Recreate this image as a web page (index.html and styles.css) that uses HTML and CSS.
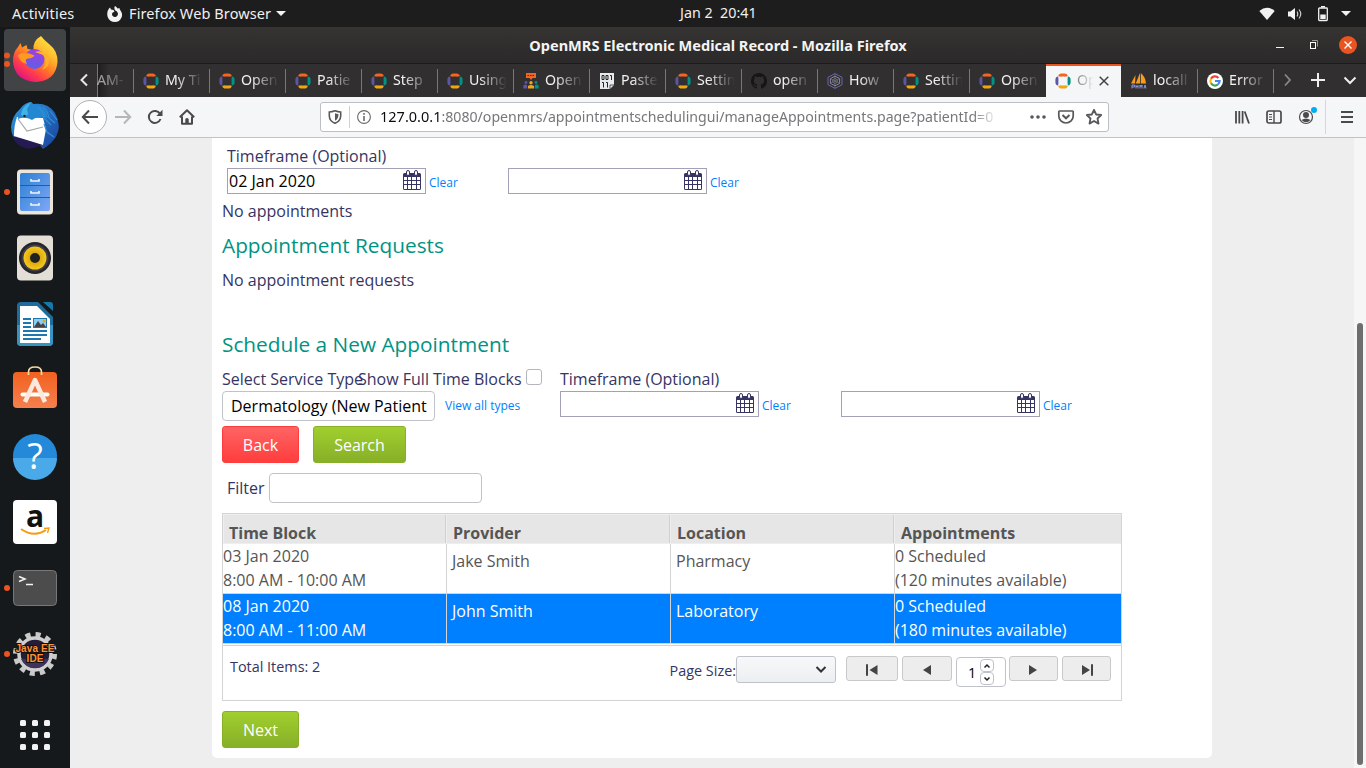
FILE: index.html
```html
<!DOCTYPE html>
<html lang="en">
<head>
<meta charset="utf-8">
<title>OpenMRS Electronic Medical Record</title>
<link rel="stylesheet" href="styles.css">
</head>
<body>
<svg class="sprite" width="0" height="0">
  <defs>
    <linearGradient id="fox" x1="1" y1="0" x2="0.3" y2="1"><stop offset="0" stop-color="#fff44f"/><stop offset=".35" stop-color="#ffc030"/><stop offset=".6" stop-color="#ff7a25"/><stop offset=".8" stop-color="#ff3a4e"/><stop offset="1" stop-color="#e01580"/></linearGradient>
    <linearGradient id="globe" x1="0.6" y1="0" x2="0.3" y2="1"><stop offset="0" stop-color="#a43be0"/><stop offset="1" stop-color="#5a62e8"/></linearGradient>
    <linearGradient id="bird" x1="0" y1="0" x2="1" y2="1"><stop offset="0" stop-color="#2f9be0"/><stop offset="1" stop-color="#1b3f9c"/></linearGradient>
    <linearGradient id="drawer" x1="0" y1="0" x2="1" y2="1"><stop offset="0" stop-color="#2b7fd4"/><stop offset="1" stop-color="#7fa8f5"/></linearGradient>
    <radialGradient id="cone"><stop offset=".4" stop-color="#d9a80c"/><stop offset="1" stop-color="#f7c81d"/></radialGradient>
    <linearGradient id="bag" x1="0" y1="0" x2="0" y2="1"><stop offset="0" stop-color="#f2611f"/><stop offset="1" stop-color="#f4804e"/></linearGradient>
  </defs>
  <symbol id="mrs" viewBox="0 0 16 16"><g fill="none" stroke-width="3"><path d="M4.700 3.500Q4.900 2 6.500 2H9.500Q11.100 2 11.300 3.500" stroke="#f26522"/><path d="M12.700 4.900Q14.100 5.100 14.100 6.700V9.300Q14.100 10.900 12.700 11.100" stroke="#009384"/><path d="M4.700 12.500Q4.900 14 6.500 14H9.500Q11.100 14 11.300 12.500" stroke="#eea616"/><path d="M3.300 4.900Q1.900 5.100 1.900 6.700V9.300Q1.900 10.900 3.300 11.100" stroke="#5b57a6"/></g></symbol>
  <symbol id="talk" viewBox="0 0 16 16"><path d="M3 0H13V5H9.500L8 7L6.500 5H3Z" fill="#f26522"/><path d="M4.500 2.500h7" stroke="#322f30" stroke-dasharray="1.500 1"/><circle cx="3" cy="9.500" r="1.400" fill="#5b57a6"/><circle cx="13" cy="9.500" r="1.400" fill="#009384"/><path d="M.3 15.500V12.800Q2.500 10.500 4.200 12.500V15.500Z" fill="#5b57a6"/><path d="M11.800 15.500V12.500Q13.500 10.500 15.700 12.800V15.500Z" fill="#009384"/><circle cx="8" cy="9.800" r="1.700" fill="#eea616"/><path d="M5 15.500V13Q8 10.800 11 13V15.500Z" fill="#eea616"/></symbol>
  <symbol id="paste" viewBox="0 0 16 16"><path d="M1 0H15V12L11 16H1Z" fill="#e8eaee"/><path d="M15 12H11V16" fill="none" stroke="#555"/><g fill="none" stroke="#222" stroke-width="1"><path d="M3 2.500h2v4h-2zM7 2.500h2v4h-2zM11 2.500h1.500v4.500M3 9.500h1.500v5M7 9.500h1.500v5"/></g></symbol>
  <symbol id="hub" viewBox="0 0 16 16"><path fill="#171516" d="M8 0C3.580 0 0 3.580 0 8c0 3.540 2.290 6.530 5.470 7.590.4.070.55-.17.55-.38v-1.490c-2.230.48-2.700-.94-2.700-.94-.36-.92-.89-1.170-.89-1.170-.73-.5.050-.49.050-.49.810.06 1.230.83 1.230.83.720 1.230 1.880.87 2.340.67.070-.52.280-.88.510-1.080-1.780-.2-3.640-.89-3.640-3.950 0-.87.310-1.590.82-2.150-.08-.2-.36-1.020.08-2.120 0 0 .67-.21 2.200.82a7.600 7.600 0 0 1 4 0c1.530-1.040 2.200-.82 2.200-.82.440 1.100.160 1.920.080 2.120.51.560.82 1.270.82 2.150 0 3.070-1.870 3.750-3.650 3.950.29.250.54.730.54 1.480v2.190c0 .21.150.46.550.38A8 8 0 0 0 16 8c0-4.420-3.580-8-8-8Z"/></symbol>
  <symbol id="hex" viewBox="0 0 16 16"><g fill="none" stroke="#6a64b4"><path d="M8 .6L15 4.300V11.700L8 15.400L1 11.700V4.300Z"/><path d="M8 3.200L12.600 5.600V10.400L8 12.800L3.400 10.400V5.600Z" stroke="#8b8b98"/><path d="M3.400 5.600L12.600 10.400M12.600 5.600L3.400 10.400M8 1V15M5 8L8 5L11 8L8 11Z" stroke="#77778a" stroke-width=".7"/></g></symbol>
  <symbol id="pma" viewBox="0 0 16 16"><path d="M0 10.500L4.500 2L4 10.500ZM4.700 10.500L9 0V10.500ZM9.800 10.500V0Q14.500 4 15 10.500Z" fill="#f89c1e"/><path d="M1 15.500V12h2.500v2H1M5 15.500V12M7 12V15.500M5 13.500H7M9 15.500V12l1 2l1-2V15.500M13 15.500L14 12L15 15.500" fill="none" stroke="#8f93cf"/></symbol>
  <symbol id="goog" viewBox="0 0 16 16"><circle cx="8" cy="8" r="8" fill="#fff"/><g fill="none" stroke-width="2.200"><path d="M11.400 4.900A4.600 4.600 0 0 0 4 5.700" stroke="#ea4335"/><path d="M4 5.700A4.600 4.600 0 0 0 4 10.300" stroke="#fbbc05"/><path d="M4 10.300A4.600 4.600 0 0 0 10.900 11.500" stroke="#34a853"/><path d="M10.900 11.500A4.600 4.600 0 0 0 12.600 8H8" stroke="#4285f4"/></g></symbol>
  <symbol id="cal" viewBox="0 0 18 20"><path fill="#363463" fill-rule="evenodd" d="M0 4.500Q0 3 1.500 3H16.500Q18 3 18 4.500V18.500Q18 20 16.500 20H1.500Q0 20 0 18.500ZM1 7v3h3v-3zM5 7v3h3v-3zM9 7v3h4v-3zM14 7v3h3v-3zM1 11v3h3v-3zM5 11v3h3v-3zM9 11v3h4v-3zM14 11v3h3v-3zM1 15v4h3v-4zM5 15v4h3v-4zM9 15v4h4v-4zM14 15v4h3v-4z"/><rect x="3.500" y=".5" width="3" height="5" rx="1.500" fill="#fff" stroke="#363463"/><rect x="11.500" y=".5" width="3" height="5" rx="1.500" fill="#fff" stroke="#363463"/></symbol>
</svg>

<header class="topbar">
  <span class="activities">Activities</span>
  <svg class="mini-fox" width="16" height="16" viewBox="0 0 16 16"><path fill="#f2f2f2" fill-rule="evenodd" d="M8 0Q10 1 10.500 2.500Q12 2 12.500 2Q12.300 3 13.500 4.500Q16 8 14.500 11.500Q12.500 16 8 16Q2.500 16 .7 11Q-.7 6 2 2.500L3 1.500L4 3.500L6.500 4L7.500 5.500L5.500 6.800Q4.500 8 5.500 9.800Q7 11.500 9.200 10.800Q11.500 9.500 10.800 7Q10 5 8 4.300Q6.700 2 8 0Z"/></svg>
  <span class="app-name">Firefox Web Browser</span>
  <i class="caret"></i>
  <span class="clock">Jan 2&nbsp; 20:41</span>
  <div class="status">
    <svg width="16" height="14" viewBox="0 0 16 14"><path d="M.3 4Q8-2.600 15.700 4L8 13Z" fill="#f2f2f2"/></svg>
    <svg width="16" height="14" viewBox="0 0 16 14"><path d="M1 4.500H3.500L8 1V13L3.500 9.500H1Z" fill="#f2f2f2"/><path d="M10 4.500Q11.500 7 10 9.500M12 2.500Q15.500 7 12 11.500" fill="none" stroke="#ccc" stroke-width="1.200"/></svg>
    <svg width="12" height="16" viewBox="0 0 12 16"><path d="M4 0H8V1.500H4Z" fill="#f2f2f2"/><rect x="1.700" y="2" width="8.600" height="12.500" rx=".8" fill="none" stroke="#f2f2f2" stroke-width="1.300"/><path d="M3.300 8.500H8.700V13H3.300Z" fill="#f2f2f2"/></svg>
    <i class="caret"></i>
  </div>
</header>

<div class="desktop">
  <nav class="dock">
    <svg viewBox="0 0 70 66"><rect x="4" y="2" width="62" height="62" rx="4" fill="#414345"/><circle cx="7" cy="28.500" r="3" fill="#e95420"/><circle cx="7" cy="37" r="3" fill="#e95420"/><path fill="url(#fox)" d="M41 9Q44 13 49 17Q58 24 57.500 35Q56 54 35 55Q14 53 13 34Q13 25 18 20L20.500 16L22 20.500L26.500 18L27.500 22Q31 22 33.500 24Q32 14 41 9Z"/><circle cx="34.500" cy="32" r="10" fill="url(#globe)"/><path d="M18 28Q24 24 34.500 28.500Q33 31 28 31.500Q24 32 27 37Q19 35 18 28Z" fill="#ff9a20"/><path d="M35 25Q43 22 49 31Q50 40 42 43Q49 35 43 28Z" fill="#ffb12a"/></svg>
    <svg viewBox="0 0 70 66"><path d="M20 16Q24 10 31 9L33 11Q48 9 55 20Q62 33 56 44L51 50L46 54L43 56L38 50L20 52Q11 45 11 34Q12 23 20 16Z" fill="url(#bird)"/><path d="M12 43L44 51L34 55Q22 58 14 47Z" fill="#251b52"/><path d="M17 24L43 25L46 36L43 52L14 43Q14 32 17 24Z" fill="#fff"/><path d="M18 26L27 38L43 34" fill="none" stroke="#a8a8a8" stroke-width="1.200"/><path d="M18 26Q18 13 31 9L33 11Q45 12 48 25Q38 22 32 27Q25 23 18 26Z" fill="#2587d2"/><path d="M38 14Q44 19 44 25L51 32M43 14Q48 18 49 25L55 30M44 31L47 39L54 44M50 18L57 27" fill="none" stroke="#2f8fd6" stroke-width="1.200"/><path d="M21 22Q21 14 31 9L27 16L28 21L25 24Z" fill="#40b4e6"/><circle cx="24.500" cy="23" r="1.300" fill="#222"/></svg>
    <svg viewBox="0 0 70 66"><circle cx="7" cy="33" r="3" fill="#e95420"/><rect x="17" y="10.500" width="36" height="45" rx="4" fill="#ebe5dc"/><rect x="20" y="14" width="30" height="38" rx="2" fill="url(#drawer)"/><path d="M20 26.500H50M20 38.500H50" stroke="#1a5fa9"/><path d="M31 20v2h8v-2M31 32v2h8v-2M31 44v2h8v-2" fill="none" stroke="#f4f4f4" stroke-width="1.600"/></svg>
    <svg viewBox="0 0 70 66"><rect x="17" y="10.500" width="36" height="45" rx="4" fill="#e4dfd6"/><circle cx="35" cy="33" r="16" fill="#26252b"/><circle cx="35" cy="33" r="13.500" fill="#3f3d46"/><circle cx="35" cy="33" r="11.500" fill="url(#cone)"/><circle cx="35" cy="33" r="5" fill="#222"/></svg>
    <svg viewBox="0 0 70 66"><path d="M21 11H38L53 26V51Q53 55 49 55H21Q17 55 17 51V15Q17 11 21 11Z" fill="#1e6c9c"/><path d="M17 34H53V51Q53 55 49 55H21Q17 55 17 51Z" fill="#3794c2"/><path d="M43 11H50Q53 11 53 14V20Z" fill="#1779a9"/><path d="M20 15H37L50 28V52H20Z" fill="#fff"/><path d="M23 28H31M23 32H31M23 36H31M23 40H47M23 44H47M23 48H41" stroke="#1d78ad" stroke-width="2"/><rect x="33.500" y="27.500" width="13" height="9" fill="#8bd0f2" stroke="#1d78ad"/><path d="M34 36L38 30L41 34L43 32L46 36Z" fill="#444"/><circle cx="44" cy="30" r="1.500" fill="#e9a51b"/></svg>
    <svg viewBox="0 0 70 66"><rect x="13" y="15" width="44" height="36" rx="4" fill="url(#bag)"/><path d="M28.500 18V15Q28.500 10 35 10Q41.500 10 41.500 15V18" fill="none" stroke="#f5d9a5" stroke-width="1.700"/><path d="M22.500 37.500H47.500" stroke="#fff" stroke-width="4" stroke-linecap="round"/><path d="M25 45L35 23L45 45" fill="none" stroke="#fbe9df" stroke-width="4.500" stroke-linejoin="round"/></svg>
    <svg viewBox="0 0 70 66"><circle cx="35" cy="33" r="22" fill="#2389d8"/><path d="M13 35H57A22 22 0 0 1 13 35Z" fill="#4aa9e8"/><text class="help-mark" x="35" y="46" text-anchor="middle">?</text></svg>
    <svg viewBox="0 0 70 66"><rect x="13" y="11" width="44" height="44" rx="4" fill="#fff"/><text class="amazon-a" x="35" y="38" text-anchor="middle">a</text><path d="M21 40Q34 49 46 41" fill="none" stroke="#f79a16" stroke-width="2"/><path d="M44 39.500L49 39L47.500 44" fill="none" stroke="#f79a16" stroke-width="1.300"/></svg>
    <svg viewBox="0 0 70 66"><circle cx="7" cy="33" r="3" fill="#e95420"/><rect x="13.500" y="15.500" width="43" height="35" rx="4" fill="#4c4c4c" stroke="#777"/><path d="M19 21.500L25 24L19 26.500M26 29.500H33" fill="none" stroke="#f4f4f4" stroke-width="1.500"/></svg>
    <svg viewBox="0 0 70 66"><circle cx="7" cy="33" r="3" fill="#e95420"/><circle cx="35" cy="33" r="19.500" fill="none" stroke="#c9c9c9" stroke-width="5" stroke-dasharray="5.100 5.110"/><circle cx="35" cy="33" r="16" fill="#241d37" stroke="#cfcfcf" stroke-width="3.500"/><path d="M21 38H49Q45 47 35 47Q25 47 21 38Z" fill="#40345f"/><g class="ide-text" text-anchor="middle"><text x="35" y="31">Java EE</text><text x="35" y="41">IDE</text></g></svg>
    <svg class="apps-grid" viewBox="0 0 70 66"><g fill="#f2f2f2"><rect x="20" y="18" width="6" height="6" rx="1.500"/><rect x="32" y="18" width="6" height="6" rx="1.500"/><rect x="44" y="18" width="6" height="6" rx="1.500"/><rect x="20" y="30" width="6" height="6" rx="1.500"/><rect x="32" y="30" width="6" height="6" rx="1.500"/><rect x="44" y="30" width="6" height="6" rx="1.500"/><rect x="20" y="42" width="6" height="6" rx="1.500"/><rect x="32" y="42" width="6" height="6" rx="1.500"/><rect x="44" y="42" width="6" height="6" rx="1.500"/></g></svg>
  </nav>

  <main class="window">
    <div class="titlebar">
      <span class="win-title">OpenMRS Electronic Medical Record - Mozilla Firefox</span>
      <svg class="win-controls" width="90" height="20" viewBox="0 0 90 20"><path d="M0 12.500H8" stroke="#f2f2f2"/><rect x="34.500" y="7.500" width="5" height="6" fill="none" stroke="#fff"/><path d="M36 5.500H41.500V11.500" fill="none" stroke="#999"/><circle cx="72" cy="10" r="9" fill="#e95420"/><path d="M68.500 6.500L75.500 13.500M75.500 6.500L68.500 13.500" stroke="#fff" stroke-width="1.400"/></svg>
    </div>

    <div class="tabs">
      <div class="tab-scroll"><svg width="10" height="14" viewBox="0 0 10 14"><path d="M8 1.500L2.500 7L8 12.500" fill="none" stroke="#e8e8e8" stroke-width="2"/></svg></div>
      <div class="tab tab-cut"><span>AM-</span></div>
      <div class="tab"><svg><use href="#mrs"/></svg><span>My Ti</span></div>
      <div class="tab"><svg><use href="#mrs"/></svg><span>Open</span></div>
      <div class="tab"><svg><use href="#mrs"/></svg><span>Patie</span></div>
      <div class="tab"><svg><use href="#mrs"/></svg><span>Step</span></div>
      <div class="tab"><svg><use href="#mrs"/></svg><span>Using</span></div>
      <div class="tab"><svg><use href="#talk"/></svg><span>Open</span></div>
      <div class="tab"><svg><use href="#paste"/></svg><span>Paste</span></div>
      <div class="tab"><svg><use href="#mrs"/></svg><span>Settin</span></div>
      <div class="tab"><svg><use href="#hub"/></svg><span>open</span></div>
      <div class="tab"><svg><use href="#hex"/></svg><span>How</span></div>
      <div class="tab"><svg><use href="#mrs"/></svg><span>Settin</span></div>
      <div class="tab"><svg><use href="#mrs"/></svg><span>Open</span></div>
      <div class="tab active"><svg><use href="#mrs"/></svg><span>Op</span><svg class="tab-close" viewBox="0 0 10 10"><path d="M.7.700L9.300 9.300M9.300.700L.7 9.300" stroke="#444" stroke-width="1.500"/></svg></div>
      <div class="tab no-line"><svg><use href="#pma"/></svg><span>locall</span></div>
      <div class="tab"><svg><use href="#goog"/></svg><span>Error</span></div>
      <div class="tab tab-tools"><svg class="tools" width="92" height="33" viewBox="0 0 92 33"><path d="M12 10.500L17 16L12 21.500" fill="none" stroke="#8a8888" stroke-width="1.800"/><path d="M38 16H52M45 9V23" stroke="#eee" stroke-width="2"/><path d="M71.500 13.500L77 19L82.500 13.500" fill="none" stroke="#eee" stroke-width="2"/></svg></div>
    </div>

    <div class="navbar">
      <div class="back"><svg width="18" height="16" viewBox="0 0 18 16"><path d="M17 8H2M8 1.500L1.800 8L8 14.500" fill="none" stroke="#4a4a4b" stroke-width="2"/></svg></div>
      <div class="nav-btn"><svg width="18" height="16" viewBox="0 0 18 16"><path d="M1 8H16M10 1.500L16.200 8L10 14.500" fill="none" stroke="#b5b6b7" stroke-width="2"/></svg></div>
      <div class="nav-btn"><svg width="16" height="16" viewBox="0 0 16 16"><path d="M13.500 10A6 6 0 1 1 13 4.800" fill="none" stroke="#4a4a4b" stroke-width="2"/><path d="M15.500.8V7H9.300Z" fill="#4a4a4b"/></svg></div>
      <div class="nav-btn"><svg width="16" height="16" viewBox="0 0 16 16"><path d="M.8 8.200L8 1.200L15.200 8.200M3 7.500V14.700H13V7.500" fill="none" stroke="#4a4a4b" stroke-width="2" stroke-linejoin="round"/><path d="M6.300 15V10Q8 8 9.700 10V15Z" fill="#4a4a4b"/></svg></div>
      <div class="urlbar">
        <svg class="shield" width="14" height="14" viewBox="0 0 14 14"><path d="M7 .8Q10 2 12.700 2V6Q12.500 11 7 13.300Q1.500 11 1.300 6V2Q4 2 7 .8Z" fill="none" stroke="#5a5a5b" stroke-width="1.600"/><path d="M7 3.300V10.800Q10.500 9 10.500 4.300Q8.500 4 7 3.300Z" fill="#5a5a5b"/></svg>
        <i class="url-sep"></i>
        <svg class="info" width="14" height="14" viewBox="0 0 14 14"><circle cx="7" cy="7" r="6.400" fill="none" stroke="#6a6a6b" stroke-width="1.100"/><path d="M7 3V4.700M7 6V11" stroke="#6a6a6b" stroke-width="1.600"/></svg>
        <span class="url"><b>127.0.0.1</b>:8080/openmrs/appointmentschedulingui/manageAppointments.page?patientId=0</span>
        <svg class="url-actions" width="74" height="18" viewBox="0 0 74 18"><g fill="#58585a"><circle cx="3" cy="9" r="1.800"/><circle cx="9" cy="9" r="1.800"/><circle cx="15" cy="9" r="1.800"/></g><path d="M30.500 3H43.500Q44.200 3 44.200 3.800V8A7.200 7 0 0 1 29.800 8V3.800Q29.800 3 30.500 3Z" fill="none" stroke="#58585a" stroke-width="1.700"/><path d="M33.500 7L37 10.300L40.500 7" fill="none" stroke="#58585a" stroke-width="2"/><path d="M65 1.800L67.200 6.500L72.200 7L68.500 10.500L69.500 15.600L65 13L60.500 15.600L61.500 10.500L57.800 7L62.800 6.500Z" fill="none" stroke="#58585a" stroke-width="1.800" stroke-linejoin="round"/></svg>
      </div>
      <div class="nav-right">
        <div class="nav-btn"><svg width="16" height="16" viewBox="0 0 16 16"><path d="M2 2V14.500M5.300 2V14.500M8.600 2V14.500M10.700 2.500L15 14.500" fill="none" stroke="#4a4a4b" stroke-width="1.800"/></svg></div>
        <div class="nav-btn"><svg width="16" height="16" viewBox="0 0 16 16"><rect x="1" y="2" width="14" height="12" rx="1.800" fill="none" stroke="#4a4a4b" stroke-width="1.700"/><path d="M8 2V14" stroke="#4a4a4b" stroke-width="1.400"/><path d="M3 5.500H6M3 8H6M3 10.500H6" stroke="#4a4a4b"/></svg></div>
        <div class="nav-btn"><svg width="22" height="20" viewBox="-1 0 22 20"><circle cx="10" cy="10" r="6.500" fill="none" stroke="#4a4a4b" stroke-width="1.200"/><circle cx="10" cy="8" r="3" fill="#4a4a4b"/><path d="M5.500 13Q10 10 14.500 13Q10 17.500 5.500 13Z" fill="#4a4a4b"/><circle cx="18" cy="3" r="3" fill="#00adf5"/></svg></div>
        <i class="nav-sep"></i>
        <svg class="menu" width="12" height="14" viewBox="0 0 12 14"><path d="M0 2H12M0 7H12M0 12H12" stroke="#4a4a4b" stroke-width="1.800"/></svg>
      </div>
    </div>

    <div class="page">
      <section class="panel">
        <div class="range range-top">
          <label class="line">Timeframe (Optional)</label>
          <div class="dates">
            <div class="date"><div class="date-box"><span>02 Jan 2020</span><svg><use href="#cal"/></svg></div><a class="small">Clear</a></div>
            <div class="date"><div class="date-box"><span></span><svg><use href="#cal"/></svg></div><a class="small">Clear</a></div>
          </div>
        </div>
        <p class="line none-booked">No appointments</p>
        <h2 class="requests-title">Appointment Requests</h2>
        <p class="line none-requested">No appointment requests</p>
        <h2 class="schedule-title">Schedule a New Appointment</h2>

        <div class="criteria">
          <div class="service">
            <label class="line">Select Service Type</label>
            <div class="service-row"><div class="text-box"><span>Dermatology (New Patient</span></div><a class="small view-all">View all types</a></div>
          </div>
          <div class="full-blocks line"><span>Show Full Time Blocks</span><i class="checkbox"></i></div>
          <div class="range">
            <label class="line">Timeframe (Optional)</label>
            <div class="dates">
              <div class="date"><div class="date-box"><span></span><svg><use href="#cal"/></svg></div><a class="small">Clear</a></div>
              <div class="date"><div class="date-box"><span></span><svg><use href="#cal"/></svg></div><a class="small">Clear</a></div>
            </div>
          </div>
        </div>

        <div class="buttons"><button class="btn cancel">Back</button><button class="btn confirm search">Search</button></div>
        <div class="filter"><label>Filter</label><div class="text-box"></div></div>

        <div class="grid">
          <div class="grid-head"><div>Time Block</div><div>Provider</div><div>Location</div><div>Appointments</div></div>
          <div class="grid-row"><div>03 Jan 2020<br>8:00 AM - 10:00 AM</div><div class="plain">Jake Smith</div><div class="plain">Pharmacy</div><div>0 Scheduled<br>(120 minutes available)</div></div>
          <div class="grid-row selected"><div>08 Jan 2020<br>8:00 AM - 11:00 AM</div><div class="plain">John Smith</div><div class="plain">Laboratory</div><div>0 Scheduled<br>(180 minutes available)</div></div>
          <div class="grid-foot">
            <span class="total">Total Items: 2</span>
            <div class="pager">
              <span class="size-label">Page Size:</span>
              <div class="size-select"><svg width="12" height="8" viewBox="0 0 12 8"><path d="M1.500 1L6 5.500L10.500 1" fill="none" stroke="#333" stroke-width="2"/></svg></div>
              <div class="pg pg-first"><svg width="12" height="12" viewBox="0 0 12 12"><path d="M0 .3H2V11.700H0ZM11.500 1V11L3.500 6Z" fill="#444"/></svg></div>
              <div class="pg pg-prev"><svg width="12" height="12" viewBox="0 0 12 12"><path d="M10 1V11L2 6Z" fill="#444"/></svg></div>
              <div class="page-no"><span>1</span><div class="spin"><i><svg viewBox="0 0 8 6"><path d="M1.500 4.500L4 2L6.500 4.500" fill="none" stroke="#222" stroke-width="1.500"/></svg></i><i><svg viewBox="0 0 8 6"><path d="M1.500 1.500L4 4L6.500 1.500" fill="none" stroke="#222" stroke-width="1.500"/></svg></i></div></div>
              <div class="pg pg-next"><svg width="12" height="12" viewBox="0 0 12 12"><path d="M1 1V11L9 6Z" fill="#444"/></svg></div>
              <div class="pg pg-last"><svg width="12" height="12" viewBox="0 0 12 12"><path d="M10 .3H12V11.700H10ZM1 1V11L9 6Z" fill="#444"/></svg></div>
            </div>
          </div>
        </div>
        <button class="btn confirm next">Next</button>
      </section>
      <div class="scrollbar"><i></i></div>
    </div>
  </main>
</div>
</body>
</html>
```
FILE: styles.css
```css
* { box-sizing: border-box; }
body { margin: 0; width: 1366px; height: 768px; overflow: hidden; font-family: "Open Sans", "Noto Sans", sans-serif; font-size: 16px; color: #363463; }
svg { display: block; flex: none; }
i { display: block; flex: none; }
.sprite { position: absolute; }

.topbar { position: relative; height: 27px; background: #1d1d1d; color: #f0f0f0; display: flex; align-items: center; padding-left: 12px; font-family: "Noto Sans", sans-serif; font-size: 14.500px; line-height: 26px; white-space: nowrap; }
.topbar > span { height: 27px; }
.activities { width: 95px; letter-spacing: .2px; }
.mini-fox { margin-right: 6px; }
.app-name { width: 147px; letter-spacing: .1px; }
.caret { border: 5px solid transparent; border-top-color: #f2f2f2; border-bottom: 0; }
.clock { margin-left: 394px; font-size: 14.300px; }
.status { display: flex; align-items: center; margin-left: auto; padding-right: 15px; }
.status svg:nth-child(1) { margin-right: 12px; }
.status svg:nth-child(2) { margin-right: 14px; }
.status svg:nth-child(3) { margin-right: 12px; }

.desktop { display: flex; height: 741px; }
.dock { width: 70px; height: 741px; background: #15191b; display: flex; flex-direction: column; }
.dock svg { width: 70px; height: 66px; }
.dock .apps-grid { margin-top: auto; }
.help-mark { font: 36px "Open Sans", sans-serif; fill: #fff; }
.amazon-a { font: bold 30px "Open Sans", sans-serif; fill: #111; }
.ide-text { font: bold 10px "Liberation Sans", sans-serif; fill: #ff9335; stroke: #111; stroke-width: 2px; paint-order: stroke; letter-spacing: .1px; }

.window { width: 1296px; display: flex; flex-direction: column; }
.titlebar { position: relative; height: 37px; background: linear-gradient(#353432, #2b2929); border-bottom: 1px solid #1c1b1b; display: flex; align-items: center; justify-content: center; }
.win-title { font: bold 14.550px "Noto Sans", sans-serif; color: #f4f4f4; }
.win-controls { position: absolute; right: 0; top: 8px; }

.tabs { height: 33px; display: flex; background: #322f30; color: #f2f2f2; }
.tab-scroll { width: 27px; display: flex; align-items: center; justify-content: center; padding-bottom: 2px; }
.tab { width: 76px; height: 33px; display: flex; align-items: center; padding-left: 10px; background: linear-gradient(#777, #777) 0 5px / 1px 24px no-repeat; }
.tab svg { width: 16px; height: 16px; margin-right: 6px; }
.tab span { width: 42px; margin-top: -1px; white-space: nowrap; font: 14.200px/24px "Noto Sans", sans-serif; -webkit-mask-image: linear-gradient(90deg, #000 25%, transparent 90%); mask-image: linear-gradient(90deg, #000 25%, transparent 90%); }
.tab.tab-cut { width: 36px; padding: 0; background: linear-gradient(#777, #777) 0 0 / 1px 33px no-repeat, linear-gradient(90deg, #1f1d1e, #322f30 12px); }
.tab-cut span { width: 34px; opacity: .6; }
.tab.active { background: #f5f6f7; border-top: 2px solid #e95420; color: #333; margin-left: 1px; width: 75px; padding: 0 0 2px 9px; }
.tab.active span { width: 20px; -webkit-mask-image: linear-gradient(90deg, rgba(0, 0, 0, .6), transparent 85%); mask-image: linear-gradient(90deg, rgba(0, 0, 0, .6), transparent 85%); }
.tab.active .tab-close { width: 10px; height: 10px; margin: 0 0 0 2px; }
.tab.no-line { background: none; }
.tab.tab-tools { width: 93px; padding: 0; }
.tab .tools { width: 92px; height: 33px; margin: 0; }

.navbar { height: 41px; background: #f5f6f7; border-bottom: 1px solid #bfc3c9; display: flex; align-items: center; padding: 0 0 1px 3px; }
.back { width: 34px; height: 34px; border: 1px solid #b1b1b2; border-radius: 50%; background: #fff; display: flex; align-items: center; justify-content: center; }
.nav-btn { width: 32px; height: 32px; display: flex; align-items: center; justify-content: center; }
.urlbar { width: 789px; height: 30px; margin-left: 117px; background: #fff; border: 1px solid #bbbec3; border-radius: 3px; display: flex; align-items: center; padding-left: 7px; }
.url-sep { width: 1px; height: 22px; background: #d0d0d2; margin: 0 7px; }
.url { width: 618px; margin-left: 9px; white-space: nowrap; color: #77777a; font: 14.150px/26px "Noto Sans", sans-serif; -webkit-mask-image: linear-gradient(90deg, #000 96%, transparent); mask-image: linear-gradient(90deg, #000 96%, transparent); }
.url b { font-weight: normal; font-size: 14.500px; color: #0c0c0d; }
.url-actions { margin-left: 31px; }
.nav-right { display: flex; align-items: center; margin-left: 117px; }
.nav-sep { width: 1px; height: 34px; background: #d5d6d8; margin-left: 3px; }
.menu { margin-left: 15px; }

.page { height: 630px; background: #eee; display: flex; }
.panel { width: 1000px; height: 620px; margin-left: 142px; background: #fff; border-radius: 0 0 5px 5px; padding: 6px 10px 0; }
.line { display: block; height: 24px; line-height: 24px; margin: 0; white-space: nowrap; }
.range-top { padding-left: 5px; }
.dates { display: flex; height: 26px; }
.date { width: 281px; display: flex; }
.date-box { width: 199px; height: 26px; border: 1px solid #a3a1b8; display: flex; justify-content: space-between; padding: 0 4px 0 1px; color: #000; line-height: 24px; }
.date-box svg { width: 18px; height: 20px; margin-top: 1px; }
.small { font-size: 12px; line-height: 30px; color: #007fff; margin-left: 3px; }
.none-booked { margin-top: 5px; }
h2 { margin: 0; font-size: 20.800px; font-weight: normal; line-height: 30px; color: #009384; }
.requests-title { margin-top: 7px; }
.none-requested { margin-top: 8px; }
.schedule-title { margin-top: 37px; }

.criteria { display: flex; height: 59px; margin-top: 8px; }
.service { width: 136px; }
.service-row { display: flex; width: 320px; }
.text-box { width: 213px; height: 30px; border: 1px solid #bfc3c9; border-radius: 4px; background: #fff; color: #000; padding: 0 8px; line-height: 28px; flex: none; }
.text-box span { display: block; width: 195px; white-space: nowrap; }
.view-all { margin-left: 10px; }
.full-blocks { display: flex; width: 202px; }
.full-blocks span { width: 168px; }
.checkbox { width: 16px; height: 16px; border: 1px solid #b3b6bd; border-radius: 3px; margin-top: 2px; }
.buttons { display: flex; gap: 14px; }
.btn { display: block; width: 77px; height: 37px; border-radius: 3px; padding: 1px 0 0; color: #fff; font: 16px/34px "Open Sans", sans-serif; }
.cancel { background: linear-gradient(#ff6464, #ff3d3d); border: 1px solid #ff3d3d; }
.confirm { background: linear-gradient(#a0cf2e, #88af28); border: 1px solid #88af28; }
.search { width: 93px; }
.filter { display: flex; margin: 10px 0 0 5px; }
.filter label { width: 42px; line-height: 30px; }

.grid { width: 900px; height: 188px; margin-top: 10px; border: 1px solid #d4d4d4; color: #555; }
.grid-head { height: 30px; display: flex; background: #e6e6e6; border-top: 1px solid #eee; border-bottom: 1px solid #eee; font-weight: bold; line-height: 36px; }
.grid-head div { width: 224px; padding-left: 6px; border-left: 1px solid #eee; border-right: 1px solid #d0d0d0; }
.grid-head div:first-child { width: 223px; padding-left: 5px; }
.grid-head div:last-child { flex: 1; border-right: 0; }
.grid-row { height: 50px; display: flex; line-height: 24px; border-bottom: 1px solid #d4d4d4; }
.grid-row div { width: 224px; border-right: 1px solid #d4d4d4; }
.grid-row div:last-child { width: 226px; border: 0; }
.grid-row .plain { padding: 5px 0 0 5px; }
.selected { background: #007fff; color: #fff; }
.grid-foot { height: 56px; margin-top: 1px; border-top: 1px solid #d4d4d4; color: #363463; font-size: 14.400px; display: flex; justify-content: space-between; padding: 10px 10px 0 7px; }
.total { line-height: 22px; }
.pager { display: flex; align-items: flex-start; }
.size-label { line-height: 30px; }
.size-select { width: 100px; height: 27px; border: 1px solid #bfc3c9; border-radius: 3px; background: linear-gradient(#f7f8f9, #eceff2); padding: 9px 0 0 78px; }
.pg { height: 25px; width: 49px; border: 1px solid #c9c9c9; border-radius: 3px; background: #ededed; display: flex; align-items: center; justify-content: center; padding-top: 3px; }
.pg-first { width: 52px; margin-left: 10px; }
.pg-prev { width: 50px; margin: 0 4px; }
.pg-next { margin: 0 4px 0 3px; }
.page-no { width: 50px; height: 30px; margin-top: 1px; border: 1px solid #bfc3c9; border-radius: 4px; background: #fff; display: flex; align-items: center; padding-left: 11px; color: #000; }
.page-no span { width: 12px; padding-top: 1px; }
.spin i { width: 14px; height: 13px; border: 1px solid #bfc3c9; border-radius: 4px; display: flex; align-items: center; justify-content: center; }
.spin svg { width: 8px; height: 6px; }
.next { margin-top: 10px; }

.scrollbar { width: 12px; height: 630px; background: #f6f6f6; margin-left: auto; padding: 185px 3px 0; }
.scrollbar i { width: 6px; height: 442px; border-radius: 3px; background: #6e6e6e; }
```
